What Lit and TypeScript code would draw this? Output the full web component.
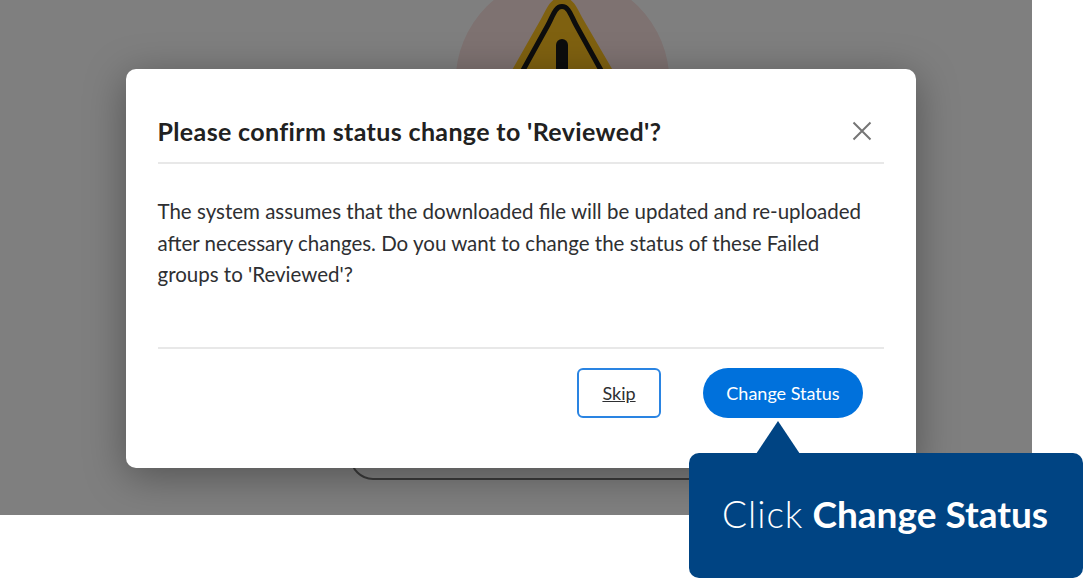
import { LitElement, html, css } from 'lit';
import { customElement } from 'lit/decorators.js';

@customElement('app-root')
export class AppRoot extends LitElement {
  static styles = css`
    :host {
      display: block;
      position: relative;
      width: 1083px;
      height: 578px;
      overflow: hidden;
      background: #fff;
      font-family: Lato, 'Noto Sans', sans-serif;
      color: #2e2f32;
    }
    .page {
      position: relative;
      width: 1032px;
      height: 515px;
      overflow: hidden;
      background: #fff;
    }
    .behind {
      position: absolute;
      left: 0;
      top: 0;
    }
    .overlay {
      position: absolute;
      inset: 0;
      background: rgba(0, 0, 0, 0.5);
    }
    .modal {
      position: relative;
      box-sizing: border-box;
      width: 790px;
      height: 399px;
      margin: 69px 0 0 126px;
      padding: 0 32px;
      display: flex;
      flex-direction: column;
      background: #fff;
      border-radius: 10px;
      box-shadow: 0 8px 40px rgba(0, 0, 0, 0.35);
    }
    .header {
      height: 95px;
      flex: none;
      box-sizing: border-box;
      display: flex;
      align-items: center;
      justify-content: space-between;
      padding-top: 30px;
      border-bottom: 2px solid #e8e8e8;
    }
    h2 {
      margin: 0 0 0 -0.5px;
      font-size: 25px;
      letter-spacing: 0.36px;
      line-height: 64px;
      font-weight: 700;
      color: #212121;
    }
    .close {
      display: block;
      margin-right: 12px;
    }
    .body {
      flex: 1;
      margin: 0 0 0 -0.5px;
      padding: 32px 20px 0 0;
      font-size: 20.5px;
      line-height: 31.5px;
      color: #2e2f32;
    }
    .footer {
      height: 121px;
      flex: none;
      box-sizing: border-box;
      display: flex;
      align-items: flex-start;
      justify-content: flex-end;
      gap: 42px;
      padding: 19px 21px 0 0;
      border-top: 2px solid #e8e8e8;
    }
    button {
      height: 50px;
      font-family: inherit;
      font-size: 18px;
      background: none;
      padding: 0;
    }
    .skip {
      width: 84px;
      border: 2px solid #2a84e2;
      border-radius: 6px;
      background: #fff;
      color: #2e2f32;
      text-decoration: underline;
    }
    .primary {
      width: 160px;
      border: 0;
      border-radius: 25px;
      background: #0071dc;
      color: #fff;
    }
    .callout {
      position: absolute;
      left: 689px;
      top: 453px;
      width: 394px;
      height: 125px;
      box-sizing: border-box;
      display: flex;
      align-items: center;
      padding: 0 0 4px 33px;
      background: #004483;
      border-radius: 10px;
      color: #fff;
      font-size: 37px;
      white-space: nowrap;
    }
    .callout .click {
      font-weight: 300;
      letter-spacing: 1px;
      margin-right: 9px;
    }
    .callout b {
      font-weight: 700;
    }
    .arrow {
      position: absolute;
      left: 67px;
      top: -32px;
    }
  `;

  render() {
    return html`
      <div class="page">
        <svg class="behind" width="1032" height="515" viewBox="0 0 1032 515">
          <circle cx="562.5" cy="82" r="107" fill="#fce4e2" />
          <path
            d="M503 86 L541 19 C547 8 551 -3 562 -3 C573 -3 577 8 583 19 L622 86 Z"
            fill="#ffc220"
          />
          <path
            d="M522 72 L548 25 C553 16 555 6.5 562 6.5 C569 6.5 571 16 576 25 L602 72"
            fill="none"
            stroke="#1a1a1a"
            stroke-width="5"
          />
          <path d="M562 45 V100" stroke="#1a1a1a" stroke-width="12" stroke-linecap="round" />
          <rect x="351" y="400" width="420" height="79" rx="22" fill="#fff" stroke="#777" stroke-width="2" />
        </svg>
        <div class="overlay"></div>
        <div class="modal">
          <div class="header">
            <h2>Please confirm status change to 'Reviewed'?</h2>
            <svg class="close" width="20" height="20" viewBox="0 0 20 20">
              <path d="M1.5 1.5 L18.5 18.5 M18.5 1.5 L1.5 18.5" stroke="#757575" stroke-width="2" />
            </svg>
          </div>
          <p class="body">
            The system assumes that the downloaded file will be updated and re-uploaded
            after necessary changes. Do you want to change the status of these Failed
            groups to 'Reviewed'?
          </p>
          <div class="footer">
            <button class="skip">Skip</button>
            <button class="primary">Change Status</button>
          </div>
        </div>
      </div>
      <div class="callout">
        <svg class="arrow" width="44" height="33" viewBox="0 0 44 33">
          <path d="M22 0 L0 33 L44 33 Z" fill="#004483" />
        </svg>
        <span class="click">Click</span><b>Change Status</b>
      </div>
    `;
  }
}
